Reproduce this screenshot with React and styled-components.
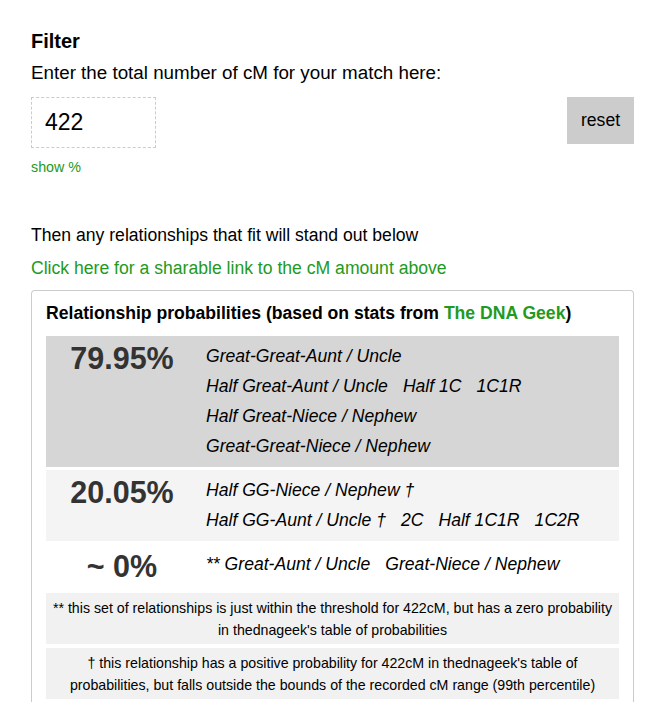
import React from "react";
import styled, { createGlobalStyle } from "styled-components";

const GREEN = "#229a22";

const GlobalStyle = createGlobalStyle`
  body {
    margin: 0;
    font-family: "Liberation Sans", Arial, sans-serif;
    color: #000;
    background: #fff;
  }
`;

const Page = styled.div`
  padding: 29px 37px 0 31px;
`;

const Title = styled.h3`
  margin: 0;
  font-size: 20px;
  font-weight: bold;
  line-height: 24px;
`;

const Text = styled.p`
  margin: ${(p) => p.$margin || "0"};
  font-size: ${(p) => p.$size || 17.6}px;
  line-height: 24px;
  color: ${(p) => (p.$green ? GREEN : "#000")};
`;

const InputRow = styled.div`
  display: flex;
  justify-content: space-between;
  align-items: flex-start;
  margin-top: 12px;
`;

const CmInput = styled.input`
  box-sizing: border-box;
  width: 125px;
  height: 51px;
  border: 1px dashed #ccc;
  padding: 0 13px;
  font-family: inherit;
  font-size: 23px;
  color: #000;
  outline: none;
`;

const ResetButton = styled.button`
  width: 67px;
  height: 47px;
  border: none;
  background: #ccc;
  font-family: inherit;
  font-size: 17.6px;
  color: #000;
  padding: 0;
`;

const SmallLink = styled.div`
  margin-top: 10px;
  font-size: 14.3px;
  line-height: 18px;
  color: ${GREEN};
`;

const Panel = styled.div`
  margin-top: 10px;
  border: 1px solid #ccc;
  border-bottom: none;
  border-radius: 4px 4px 0 0;
  padding: 10px 14px 4px;
`;

const PanelTitle = styled.div`
  font-size: 17.6px;
  font-weight: bold;
  line-height: 24px;
  margin-bottom: 11px;
`;

const Green = styled.span`
  color: ${GREEN};
`;

const Row = styled.div`
  display: flex;
  background: ${(p) => p.$bg};
  padding: 5px 0 6px;
  margin-bottom: 3px;
`;

const Percent = styled.div`
  flex: 0 0 152px;
  text-align: center;
  font-size: 30.5px;
  font-weight: bold;
  color: #333;
  line-height: 34px;
`;

const Relations = styled.div`
  padding-left: 8px;
  font-size: 17.6px;
  font-style: italic;
  line-height: 30px;
`;

const Rel = styled.span`
  margin-right: 15px;
`;

const Notes = styled.div`
  margin-top: 4px;
`;

const Note = styled.div`
  background: #f1f1f1;
  font-size: 14.2px;
  line-height: 21.5px;
  text-align: center;
  padding: 5px 6px 3px;
  margin-bottom: 4px;
`;

const rows = [
  {
    pct: "79.95%",
    bg: "#d6d6d6",
    lines: [
      ["Great-Great-Aunt / Uncle"],
      ["Half Great-Aunt / Uncle", "Half 1C", "1C1R"],
      ["Half Great-Niece / Nephew"],
      ["Great-Great-Niece / Nephew"],
    ],
  },
  {
    pct: "20.05%",
    bg: "#f4f4f4",
    lines: [
      ["Half GG-Niece / Nephew †"],
      ["Half GG-Aunt / Uncle †", "2C", "Half 1C1R", "1C2R"],
    ],
  },
  {
    pct: "~ 0%",
    bg: "#fff",
    lines: [["** Great-Aunt / Uncle", "Great-Niece / Nephew"]],
  },
];

export default function App() {
  return (
    <Page>
      <GlobalStyle />
      <Title>Filter</Title>
      <Text $margin="8px 0 0" $size={18.8}>
        Enter the total number of cM for your match here:
      </Text>
      <InputRow>
        <CmInput defaultValue="422" />
        <ResetButton>reset</ResetButton>
      </InputRow>
      <SmallLink>show %</SmallLink>
      <Text $margin="47px 0 0">Then any relationships that fit will stand out below</Text>
      <Text $margin="9px 0 0" $green>
        Click here for a sharable link to the cM amount above
      </Text>
      <Panel>
        <PanelTitle>
          Relationship probabilities (based on stats from <Green>The DNA Geek</Green>)
        </PanelTitle>
        {rows.map((r) => (
          <Row key={r.pct} $bg={r.bg}>
            <Percent>{r.pct}</Percent>
            <Relations>
              {r.lines.map((line, i) => (
                <div key={i}>
                  {line.map((item) => (
                    <Rel key={item}>{item}</Rel>
                  ))}
                </div>
              ))}
            </Relations>
          </Row>
        ))}
        <Notes>
          <Note>
            ** this set of relationships is just within the threshold for 422cM, but has a zero
            probability in thednageek's table of probabilities
          </Note>
          <Note>
            † this relationship has a positive probability for 422cM in thednageek's table of
            probabilities, but falls outside the bounds of the recorded cM range (99th percentile)
          </Note>
        </Notes>
      </Panel>
    </Page>
  );
}
